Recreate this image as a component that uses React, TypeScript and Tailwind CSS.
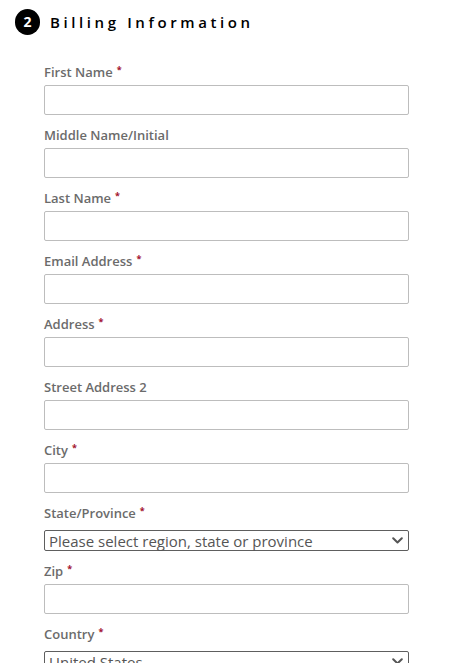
import React from 'react';

type Field = {
    label: string;
    required?: boolean;
    kind?: 'input' | 'select';
    value?: string;
};

const fields: Field[] = [
    { label: 'First Name', required: true },
    { label: 'Middle Name/Initial' },
    { label: 'Last Name', required: true },
    { label: 'Email Address', required: true },
    { label: 'Address', required: true },
    { label: 'Street Address 2' },
    { label: 'City', required: true },
    { label: 'State/Province', required: true, kind: 'select', value: 'Please select region, state or province' },
    { label: 'Zip', required: true },
    { label: 'Country', required: true, kind: 'select', value: 'United States' },
];

const Chevron = () => (
    <svg width="11" height="7" viewBox="0 0 11 7" className="shrink-0">
        <path d="M1.2 1.2l4.3 4.3 4.3-4.3" fill="none" stroke="#555" strokeWidth="2" strokeLinecap="round" strokeLinejoin="round" />
    </svg>
);

const FormRow: React.FC<{ field: Field }> = ({ field }) => (
    <div className="mb-3">
        <div
            className={`flex items-start h-4 text-[13px] leading-4 font-semibold text-[#6b6b6b] ${field.kind === 'select' ? 'mb-[9px]' : 'mb-[5px]'}`}
        >
            {field.label}
            {field.required && <span className="text-[#a3122f] text-[9px] leading-3 ml-[4px] font-bold">*</span>}
        </div>
        {field.kind === 'select' ? (
            <div className="flex items-center justify-between h-[21px] border border-[#5e5e5e] rounded-[2px] pl-[4px] pr-[5px]">
                <span className="text-[15px] leading-5 text-[#555] font-normal whitespace-nowrap">{field.value}</span>
                <Chevron />
            </div>
        ) : (
            <div className="h-[30px] border border-[#bdbdbd] rounded-[2px] bg-white" />
        )}
    </div>
);

export default function App() {
    return (
        <div className="w-[456px] h-[663px] overflow-hidden bg-white" style={{ fontFamily: '"Open Sans", "Noto Sans", sans-serif' }}>
            <div className="flex items-center gap-[10px] pl-[15px] pt-[9px]">
                <div className="w-[25px] h-[26px] rounded-full bg-black text-white flex items-center justify-center text-[14px] font-bold leading-none">
                    2
                </div>
                <h2 className="text-[15px] font-semibold tracking-[3.6px] text-black leading-none">Billing Information</h2>
            </div>
            <div className="pl-[44px] pr-[47px] pt-[29px]">
                {fields.map(f => (
                    <FormRow key={f.label} field={f} />
                ))}
            </div>
        </div>
    );
}
